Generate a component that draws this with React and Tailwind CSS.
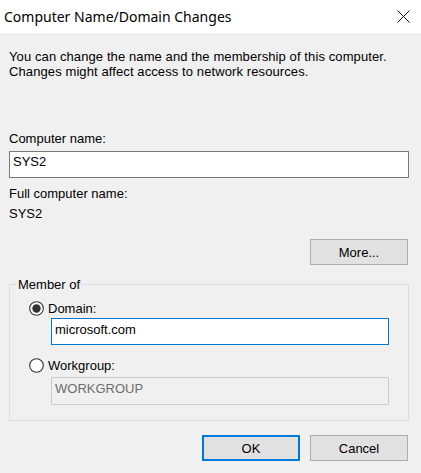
import React from "react";

function Radio({ checked }) {
  return (
    <svg width="15" height="15" viewBox="0 0 15 15" className="shrink-0">
      <circle cx="7.5" cy="7.5" r="6.8" fill="#ffffff" stroke="#333333" strokeWidth="1.1" />
      {checked && <circle cx="7.5" cy="7.5" r="4.2" fill="#333333" />}
    </svg>
  );
}

export default function App() {
  return (
    <div
      className="w-[421px] h-[473px] bg-[#f0f0f0] text-black text-[13px] leading-[15px] overflow-hidden"
      style={{ fontFamily: '"Liberation Sans", Arial, sans-serif' }}
    >
      <div className="h-[33px] bg-white flex items-center justify-between pl-[4px] pr-[11px]">
        <span
          className="text-[14px] leading-[20px] text-black"
          style={{ fontFamily: '"Noto Sans", "Open Sans", sans-serif' }}
        >
          Computer Name/Domain Changes
        </span>
        <svg width="13" height="13" viewBox="0 0 13 13">
          <path d="M0.5 0.5 L12.5 12.5 M12.5 0.5 L0.5 12.5" stroke="#111" strokeWidth="1" fill="none" />
        </svg>
      </div>

      <div className="pl-[9px] pr-[12px]">
        <p className="mt-[16px] tracking-[0.1px]">
          You can change the name and the membership of this computer.
          <br />
          Changes might affect access to network resources.
        </p>

        <div className="mt-[52px]">Computer name:</div>
        <div className="mt-[5px] h-[27px] border border-[#7a7a7a] bg-white pl-[3px] pt-[2px]">SYS2</div>

        <div className="mt-[8px]">Full computer name:</div>
        <div className="mt-[5px]">SYS2</div>

        <div className="flex justify-end pr-[1px] mt-[18px]">
          <button className="w-[98px] h-[26px] border border-[#adadad] bg-[#e1e1e1] flex items-center justify-center">
            More...
          </button>
        </div>

        <div className="relative mt-[19px] border border-[#dcdcdc] h-[137px] pl-[19px] pr-[19px] pt-[16px]">
          <div className="absolute -top-[8px] left-[7px] px-[1px] bg-[#f0f0f0]">Member of</div>

          <div className="flex items-center gap-[4px]">
            <Radio checked />
            <span>Domain:</span>
          </div>
          <div className="ml-[22px] mt-[2px] h-[27px] border border-[#0078d7] bg-white pl-[3px] pt-[3px]">
            microsoft.com
          </div>

          <div className="flex items-center gap-[4px] mt-[13px]">
            <Radio />
            <span>Workgroup:</span>
          </div>
          <div className="ml-[22px] mt-[4px] h-[28px] border border-[#cccccc] bg-[#f0f0f0] text-[#6d6d6d] pl-[3px] pt-[3px]">
            WORKGROUP
          </div>
        </div>

        <div className="flex justify-end gap-[10px] pr-[1px] mt-[14px]">
          <button className="w-[98px] h-[26px] border-2 border-[#0078d7] bg-[#e1e1e1] flex items-center justify-center">
            OK
          </button>
          <button className="w-[98px] h-[26px] border border-[#adadad] bg-[#e1e1e1] flex items-center justify-center">
            Cancel
          </button>
        </div>
      </div>
    </div>
  );
}
